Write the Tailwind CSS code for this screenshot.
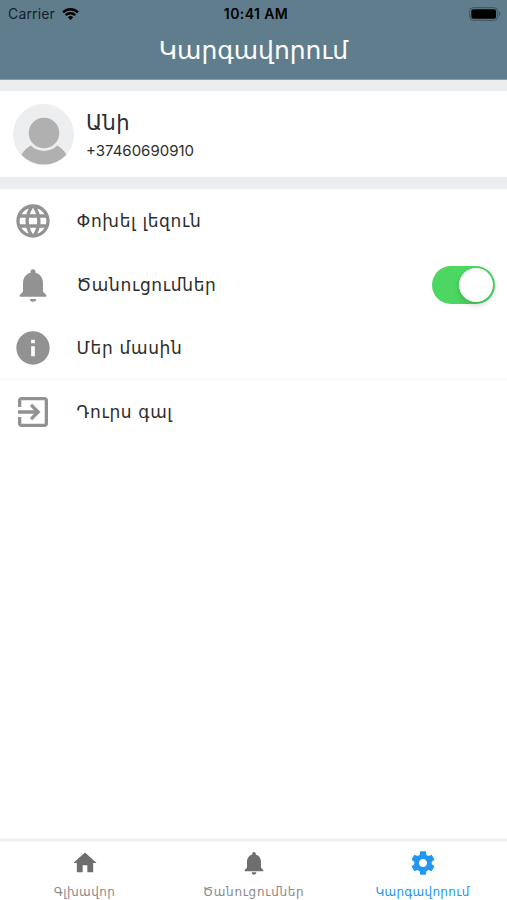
<!DOCTYPE html>
<html lang="hy">
<head>
  <meta charset="UTF-8" />
  <meta name="viewport" content="width=device-width, initial-scale=1.0" />
  <title>Կարգավորում</title>
  <script src="https://cdn.jsdelivr.net/npm/@tailwindcss/browser@4"></script>
</head>
<body class="bg-white">
  <div class="h-[900px] w-[507px] flex flex-col overflow-hidden font-['DejaVu_Sans',sans-serif] text-[#2d2d2d]">

    <!-- Header -->
    <header class="h-[80px] shrink-0 bg-[#607d8e] border-b border-[#86a0b0]">
      <div class="h-[27px] grid grid-cols-3 items-center pl-2 pr-[6px] font-[Inter,sans-serif] text-black">
        <div class="flex items-center gap-[7px]">
          <span class="text-[14px] tracking-[0.15px] text-[#14212a]">Carrier</span>
          <svg class="w-[17px] h-[12px]" viewBox="0 0 17 12" fill="none" stroke="#000" stroke-width="2.3">
            <path d="M1 4.3a10.8 10.8 0 0 1 15 0" />
            <path d="M3.7 7.2a6.9 6.9 0 0 1 9.6 0" />
            <path d="M8.5 12L5.8 9.2a3.9 3.9 0 0 1 5.4 0z" fill="#000" stroke="none" />
          </svg>
        </div>
        <span class="pl-[3px] text-center text-[14px] font-semibold tracking-[0.4px] whitespace-nowrap">10:41 AM</span>
        <svg class="w-[32px] h-[14px] justify-self-end" viewBox="0 0 32 14">
          <rect x="0.7" y="0.7" width="28" height="12.6" rx="3.6" fill="none" stroke="#3c505c" stroke-width="1" />
          <rect x="2.3" y="2.3" width="24.8" height="9.4" rx="2" fill="#000" />
          <path d="M30 4.8c1.6.6 1.6 3.8 0 4.4z" fill="#3c505c" />
        </svg>
      </div>
      <h1 class="h-[48px] flex items-center justify-center text-[25px] text-white">Կարգավորում</h1>
    </header>

    <div class="h-[11px] shrink-0 bg-[#ebedef]"></div>

    <!-- Profile -->
    <section class="h-[86px] shrink-0 flex items-center gap-3 pl-[13px]">
      <svg class="w-[61px] h-[61px]" viewBox="0 0 61 61">
        <circle cx="30.5" cy="30.5" r="30.5" fill="#eceeef" />
        <circle cx="31" cy="29" r="15.3" fill="#b0b0b0" />
        <path d="M17.8 41.5a18.5 18.5 0 0 0 26.4 0q5.8 3 9.2 9.2a30.5 30.5 0 0 1-45 0q3.6-6.2 9.4-9.2z" fill="#b0b0b0" />
      </svg>
      <div class="pt-[5px]">
        <p class="text-[21px] leading-[28px] tracking-[0.4px]">Անի</p>
        <p class="text-[15px] leading-[27px] font-[Inter,sans-serif]">+37460690910</p>
      </div>
    </section>

    <div class="h-[12px] shrink-0 bg-[#ebedef]"></div>

    <!-- Settings list -->
    <main class="flex-1 text-[17px] tracking-[0.65px]">
      <div class="h-[64px] flex items-center gap-6 pl-[12.5px]">
        <svg class="size-10" viewBox="0 0 24 24" fill="#929292"><path d="M11.99 2C6.47 2 2 6.48 2 12s4.47 10 9.99 10C17.52 22 22 17.52 22 12S17.52 2 11.99 2zm6.93 6h-2.95c-.32-1.25-.78-2.45-1.38-3.56 1.84.63 3.37 1.91 4.33 3.56zM12 4.04c.83 1.2 1.48 2.53 1.91 3.96h-3.82c.43-1.43 1.08-2.76 1.91-3.96zM4.26 14C4.1 13.36 4 12.69 4 12s.1-1.36.26-2h3.38c-.08.66-.14 1.32-.14 2 0 .68.06 1.34.14 2H4.26zm.82 2h2.95c.32 1.25.78 2.45 1.38 3.56-1.84-.63-3.37-1.9-4.33-3.56zm2.95-8H5.08c.96-1.66 2.49-2.93 4.33-3.56C8.81 5.55 8.35 6.75 8.03 8zM12 19.96c-.83-1.2-1.48-2.53-1.91-3.96h3.82c-.43 1.43-1.08 2.76-1.91 3.96zM14.34 14H9.66c-.09-.66-.16-1.32-.16-2 0-.68.07-1.35.16-2h4.68c.09.65.16 1.32.16 2 0 .68-.07 1.34-.16 2zm.25 5.56c.6-1.11 1.06-2.31 1.38-3.56h2.95c-.96 1.65-2.49 2.93-4.33 3.56zM16.36 14c.08-.66.14-1.32.14-2 0-.68-.06-1.34-.14-2h3.38c.16.64.26 1.31.26 2s-.1 1.36-.26 2h-3.38z" /></svg>
        <span class="pt-0.5">Փոխել լեզուն</span>
      </div>
      <div class="h-[63px] flex items-center gap-6 pl-[12.5px] pr-3">
        <svg class="size-10" viewBox="0 0 24 24" fill="#929292"><path d="M12 22c1.1 0 2-.7 2-1.6h-4c0 .9.9 1.6 2 1.6zm6-6v-5c0-3.07-1.64-5.64-4.5-6.32V4c0-.83-.67-1.5-1.5-1.5s-1.5.67-1.5 1.5v.68C7.63 5.36 6 7.92 6 11v5l-2 2v1h16v-1l-2-2z" /></svg>
        <span class="flex-1 pt-0.5">Ծանուցումներ</span>
        <div class="w-[63px] h-[38px] rounded-full bg-[#4cd763] flex items-center justify-end pr-[2px]">
          <div class="size-[34px] rounded-full bg-white shadow-[0_3px_6px_rgba(0,0,0,0.18)]"></div>
        </div>
      </div>
      <div class="h-[64px] flex items-center gap-6 pl-[12.5px] border-b border-[#f3f3f3]">
        <svg class="size-10" viewBox="0 0 24 24" fill="#929292"><path d="M12 2C6.48 2 2 6.48 2 12s4.48 10 10 10 10-4.48 10-10S17.52 2 12 2zm1.1 15h-2.2v-6h2.2v6zm0-7.8h-2.2V7h2.2v2.2z" /></svg>
        <span class="pt-0.5">Մեր մասին</span>
      </div>
      <div class="h-[64px] flex items-center gap-6 pl-[12.5px]">
        <svg class="size-10" viewBox="0 0 24 24" fill="#929292"><path d="M10.09 15.59L11.5 17l5-5-5-5-1.41 1.41L12.67 11H3v2h9.67l-2.58 2.59zM19 3H5c-1.11 0-2 .9-2 2v4h2V5h14v14H5v-4H3v4c0 1.1.89 2 2 2h14c1.1 0 2-.9 2-2V5c0-1.1-.9-2-2-2z" /></svg>
        <span class="pt-0.5">Դուրս գալ</span>
      </div>
    </main>

    <!-- Tab bar -->
    <nav class="h-[61px] shrink-0 border-t-2 border-[#ebebeb] grid grid-cols-3 text-[12px] text-[#8a8a8a]">
      <a class="flex flex-col items-center pt-2">
        <svg class="size-7" viewBox="0 0 24 24" fill="#6e6e6e"><path d="M10 20v-6h4v6h5v-8h3L12 3 2 12h3v8z" /></svg>
        <span class="mt-1.5 leading-[18px] tracking-[0.4px]">Գլխավոր</span>
      </a>
      <a class="flex flex-col items-center pt-2">
        <svg class="size-7" viewBox="0 0 24 24" fill="#6e6e6e"><path d="M12 22c1.1 0 2-.9 2-2h-4c0 1.1.89 2 2 2zm6-6v-5c0-3.07-1.64-5.64-4.5-6.32V4c0-.83-.67-1.5-1.5-1.5s-1.5.67-1.5 1.5v.68C7.63 5.36 6 7.92 6 11v5l-2 2v1h16v-1l-2-2z" /></svg>
        <span class="mt-1.5 leading-[18px] tracking-[0.7px]">Ծանուցումներ</span>
      </a>
      <a class="flex flex-col items-center pt-2 text-[#2196f3]">
        <svg class="size-7" viewBox="0 0 24 24" fill="#2196f3"><path d="M19.43 12.98c.04-.32.07-.64.07-.98s-.03-.66-.07-.98l2.11-1.65c.19-.15.24-.42.12-.64l-2-3.46c-.12-.22-.39-.3-.61-.22l-2.49 1c-.52-.4-1.08-.73-1.69-.98l-.38-2.65C14.46 2.18 14.25 2 14 2h-4c-.25 0-.46.18-.49.42l-.38 2.65c-.61.25-1.17.59-1.69.98l-2.49-1c-.23-.09-.49 0-.61.22l-2 3.46c-.13.22-.07.49.12.64l2.11 1.65c-.04.32-.07.65-.07.98s.03.66.07.98l-2.11 1.65c-.19.15-.24.42-.12.64l2 3.46c.12.22.39.3.61.22l2.49-1c.52.4 1.08.73 1.69.98l.38 2.65c.03.24.24.42.49.42h4c.25 0 .46-.18.49-.42l.38-2.65c.61-.25 1.17-.59 1.69-.98l2.49 1c.23.09.49 0 .61-.22l2-3.46c.12-.22.07-.49-.12-.64l-2.11-1.65zM12 15.5c-1.93 0-3.5-1.57-3.5-3.5s1.57-3.5 3.5-3.5 3.5 1.57 3.5 3.5-1.57 3.5-3.5 3.5z" /></svg>
        <span class="mt-1.5 leading-[18px] tracking-[0.3px]">Կարգավորում</span>
      </a>
    </nav>
  </div>
</body>
</html>
